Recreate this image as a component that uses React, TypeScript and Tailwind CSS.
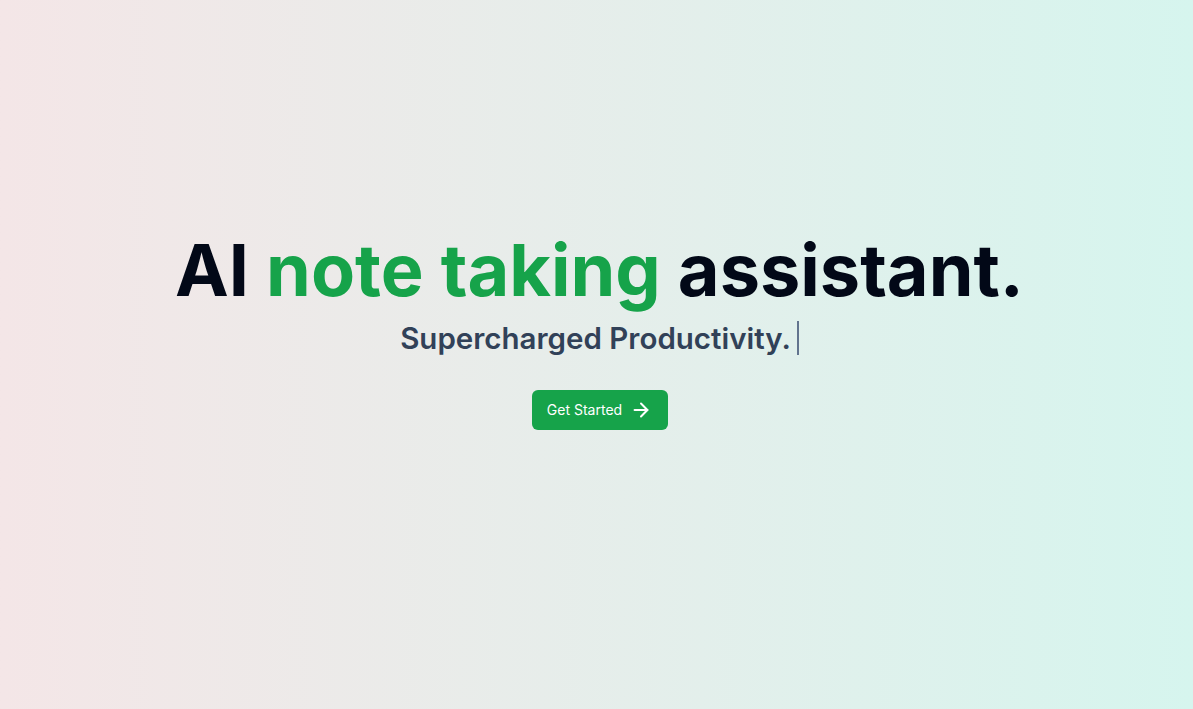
import { ArrowRight } from "lucide-react";

export default function App() {
  return (
    <main
      className="flex h-screen w-full flex-col items-center justify-center bg-gradient-to-r from-[#f4e6e7] to-[#d6f5ee] pb-[45px] pl-[6px]"
      style={{ fontFamily: "Inter, sans-serif" }}
    >
      <h1 className="text-7xl font-bold leading-none text-[#020817]">
        AI <span className="text-[#16a34a]">note taking</span> assistant.
      </h1>
      <div className="mt-[14px] flex h-9 items-center text-[29.5px] font-semibold text-slate-700">
        <span>Supercharged Productivity.</span>
        <span className="ml-[6px] inline-block h-[34px] w-[2px] bg-slate-500" />
      </div>
      <button className="mt-[34px] flex h-10 w-[136px] items-center justify-center gap-2 rounded-md bg-[#16a34a] text-sm text-white">
        Get Started
        <ArrowRight size={22} strokeWidth={2.2} />
      </button>
    </main>
  );
}
